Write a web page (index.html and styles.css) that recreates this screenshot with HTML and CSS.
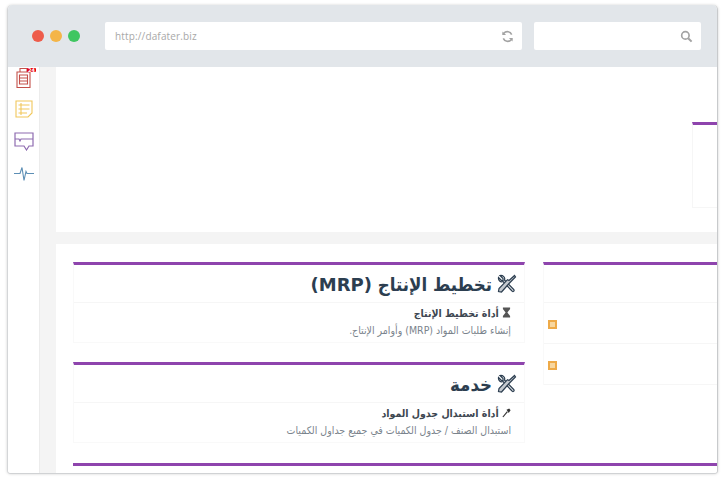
FILE: index.html
```html
<!DOCTYPE html>
<html lang="ar">
<head>
<meta charset="utf-8">
<title>dafater</title>
<link rel="stylesheet" href="styles.css">
</head>
<body>
<div class="window">
  <header class="toolbar">
    <div class="lights"><span class="dot red"></span><span class="dot amber"></span><span class="dot green"></span></div>
    <div class="field url">
      <span class="url-text">http://dafater.biz</span>
      <svg class="tool-icon" viewBox="0 0 14 14"><path d="M11.500 5A5 5 0 0 0 3 3.600L2 5M2.500 9A5 5 0 0 0 11 10.400L12 9" fill="none" stroke="#a3a3a3" stroke-width="1.700"/><path d="M1.500 1.500V5.500H5.500ZM12.500 12.500V8.500H8.500Z" fill="#a3a3a3"/></svg>
    </div>
    <div class="field search">
      <svg class="tool-icon" viewBox="0 0 14 14"><circle cx="5.800" cy="5.800" r="4" fill="none" stroke="#a3a3a3" stroke-width="1.800"/><path d="M8.800 8.800L12.500 12.500" stroke="#a3a3a3" stroke-width="2.200"/></svg>
    </div>
  </header>
  <div class="body">
    <nav class="rail">
      <div class="rail-item clip">
        <svg class="rail-icon clip-icon" viewBox="0 0 15 20"><path d="M1 4H14V19.500H1ZM4 .5H11V4H4ZM3.500 7H11.500V16H3.500ZM3.500 10H11.500M3.500 13H11.500" fill="none" stroke="#c4504a" stroke-width="1.100"/></svg>
        <span class="badge">24</span>
      </div>
      <div class="rail-item">
        <svg class="rail-icon" viewBox="0 0 18 18"><path d="M1 1H17V13L13 17H1ZM3.500 5H14.500M3.500 9H14.500M3.500 13H12M6 3V15" fill="none" stroke="#f1c75b" stroke-width="1.100"/></svg>
      </div>
      <div class="rail-item">
        <svg class="rail-icon wide" viewBox="0 0 20 19"><path d="M1 1H19V14H15L12.500 18L10 14H1ZM1 7H5L6 9L7 7H19" fill="none" stroke="#8e6bb0" stroke-width="1.200"/></svg>
      </div>
      <div class="rail-item">
        <svg class="rail-icon wide" viewBox="0 0 20 18"><path d="M0 9H6L8 3L10 16L12 7L13 9H20" fill="none" stroke="#5d8fb5" stroke-width="1.100"/></svg>
      </div>
    </nav>
    <main class="content">
      <section class="panel top-panel">
        <div class="stub"></div>
      </section>
      <section class="panel lower-panel">
        <div class="columns">
          <div class="column">
            <article class="card">
              <h2 class="card-title"><svg class="tools" viewBox="0 0 20 20"><use href="#tools"/></svg><span>تخطيط الإنتاج <span class="latin">(MRP)</span></span></h2>
              <div class="row">
                <p class="row-title"><svg class="mini" viewBox="0 0 10 12"><path d="M1 .5H9V2L6 6L9 10V11.500H1V10L4 6L1 2Z" fill="#555"/></svg> أداة تخطيط الإنتاج</p>
                <p class="row-text">إنشاء طلبات المواد (MRP) وأوامر الإنتاج.</p>
              </div>
            </article>
            <article class="card">
              <h2 class="card-title"><svg class="tools" viewBox="0 0 20 20"><use href="#tools"/></svg><span>خدمة</span></h2>
              <div class="row">
                <p class="row-title"><svg class="mini" viewBox="0 0 10 12"><path d="M1 11L6 5" stroke="#333" stroke-width="1.300"/><path d="M5 3L8 1.500L9.500 3.500L7.500 6.500Z" fill="#333"/></svg> أداة استبدال جدول المواد</p>
                <p class="row-text">استبدال الصنف / جدول الكميات في جميع جداول الكميات</p>
              </div>
            </article>
          </div>
          <article class="card side-card">
            <div class="side-head"></div>
            <div class="side-row"><span class="tag"></span></div>
            <div class="side-row"><span class="tag"></span></div>
          </article>
        </div>
        <div class="wide-bar"></div>
      </section>
    </main>
  </div>
</div>
<svg class="defs" width="0" height="0">
  <defs>
    <g id="tools">
      <path d="M3 1.500L6 4.500V6.500H4.500L1.500 3.500C1 6.500 3.500 8.500 6 7.500L15 17C16 18.500 18 16.500 16.700 15.500L7.500 6C8.500 3.500 6 1 3 1.500Z" fill="#e4e7ea" stroke="#2c3e50" stroke-width="1.200"/>
      <path d="M17.500 1.500L12 6.500L10.500 5.700L2 14.500L1.500 17.500L4.500 18L12.500 9L13.500 8L18.500 3Z" fill="#c3c9cf" stroke="#2c3e50" stroke-width="1.200"/>
    </g>
  </defs>
</svg>
</body>
</html>
```
FILE: styles.css
```css
* { box-sizing: border-box; }
html, body { margin: 0; padding: 0; background: #fff; }
body { width: 725px; height: 485px; overflow: hidden; font-family: "DejaVu Sans", "Liberation Sans", sans-serif; }
.defs { display: block; }
.window {
  margin: 5px 0 0 7px;
  width: 711px;
  height: 469px;
  border-radius: 5px 5px 4px 4px;
  border-left: 1px solid #d4d6d8;
  border-right: 1px solid #c8cacc;
  border-bottom: 1px solid #d0d2d4;
  box-shadow: 0 0 3px rgba(0,0,0,.18);
  overflow: hidden;
  display: flex;
  flex-direction: column;
  background: #fff;
}
.toolbar {
  flex: none;
  height: 62px;
  background: #e2e6ea;
  display: flex;
  align-items: center;
  padding: 0 16px 0 24px;
}
.lights { display: flex; gap: 6px; width: 73px; }
.dot { width: 12px; height: 12px; border-radius: 50%; }
.red { background: #ee5c4b; }
.amber { background: #f4b548; }
.green { background: #3fc661; }
.field {
  height: 28px;
  background: #fff;
  border-radius: 2px;
  display: flex;
  align-items: center;
  justify-content: flex-end;
  padding: 0 8px 0 10px;
}
.url { width: 417px; margin-right: 12px; justify-content: space-between; }
.search { width: 167px; }
.url-text { font-family: "Open Sans", "DejaVu Sans", sans-serif; font-size: 10px; letter-spacing: .15px; color: #a8a8a8; }
.tool-icon { width: 13px; height: 13px; }
.body { flex: 1; display: flex; min-height: 0; }
.rail {
  flex: none;
  width: 32px;
  background: #fff;
  border-right: 1px solid #ececec;
  display: flex;
  flex-direction: column;
  align-items: center;
  gap: 8px;
  overflow: hidden;
}
.rail-item { position: relative; height: 24px; display: flex; align-items: center; justify-content: center; }
.clip { height: 21px; width: 31px; align-items: flex-start; padding-top: 1px; margin-bottom: 1px; }
.rail-icon { width: 18px; height: 18px; display: block; }
.clip-icon { width: 15px; height: 20px; }
.rail-icon.wide { width: 20px; height: 19px; }
.badge {
  position: absolute;
  top: 1px;
  left: 19px;
  background: #e60012;
  color: #fff;
  font-size: 5px;
  line-height: 4px;
  padding: 0 1px;
  font-weight: bold;
  border-radius: 1px;
}
.content { flex: 1; background: #f4f4f4; padding-left: 16px; min-width: 0; display: flex; flex-direction: column; gap: 12px; }
.panel { background: #fff; }
.top-panel { height: 165px; padding: 55px 0 0 636px; flex: none; }
.stub { border-top: 3px solid #8e44ad; border-left: 1px solid #f6f6f6; border-bottom: 1px solid #f6f6f6; height: 86px; width: 40px; }
.lower-panel { flex: 1; padding: 18px 0 0 17px; min-height: 0; overflow: hidden; }
.columns { display: grid; grid-template-columns: 452px 200px; column-gap: 18px; }
.column { display: flex; flex-direction: column; gap: 19px; }
.card { border-top: 3px solid #8e44ad; border-left: 1px solid #f9f9f9; border-right: 1px solid #f9f9f9; border-bottom: 1px solid #f9f9f9; direction: rtl; height: 81px; }
.card-title {
  margin: 0;
  height: 38px;
  padding: 1px 7px 0 0;
  display: flex;
  align-items: center;
  gap: 5px;
  font-family: "DejaVu Sans Condensed", "DejaVu Sans", sans-serif;
  font-stretch: condensed;
  font-size: 18.500px;
  font-weight: bold;
  color: #2c3e50;
  border-bottom: 1px solid #f6f6f6;
  white-space: pre;
}
.latin { font-family: "DejaVu Sans", sans-serif; font-stretch: normal; font-size: 18px; }
.tools { width: 20px; height: 20px; flex: none; }
.row { padding: 2px 13px 0 0; font-family: "DejaVu Sans Condensed", "DejaVu Sans", sans-serif; font-stretch: condensed; }
.row-title { margin: 0; font-size: 10.500px; font-weight: bold; line-height: 17px; color: #3d4751; }
.row-text { margin: 0; font-size: 10.500px; line-height: 17px; color: #7a838c; }
.mini { width: 9px; height: 11px; vertical-align: -1px; }
.side-card { height: 123px; direction: ltr; border-right: 0; }
.side-head { height: 38px; border-bottom: 1px solid #f6f6f6; }
.side-row { height: 41px; border-bottom: 1px solid #f6f6f6; display: flex; align-items: center; padding: 3px 0 0 4px; }
.tag { width: 9px; height: 9px; background: #f8d79f; border: 2px solid #eeaa48; }
.wide-bar { margin-top: 20px; height: 3px; background: #8e44ad; }
```
